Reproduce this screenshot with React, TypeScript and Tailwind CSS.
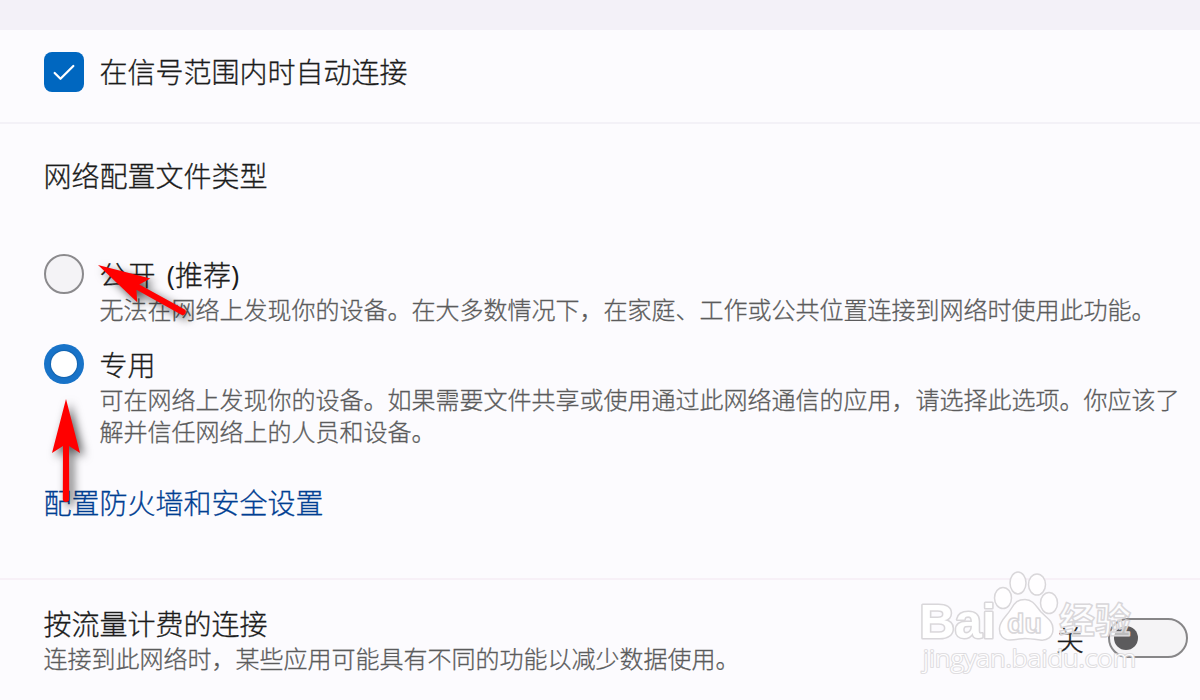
import { Check } from 'lucide-react';

function Radio({ checked }: { checked: boolean }) {
  return checked ? (
    <span className="flex h-10 w-10 shrink-0 items-center justify-center rounded-full bg-[#1873c8]">
      <span className="h-[26px] w-[26px] rounded-full bg-white shadow-[0_0_1px_1px_rgba(0,50,100,0.25)]" />
    </span>
  ) : (
    <span className="h-10 w-10 shrink-0 rounded-full border-2 border-[#8b8a8d] bg-[#f4f3f6]" />
  );
}

function Arrow() {
  return (
    <path
      d="M0 0 L14 54 L3 47 L3.2 100 Q3.2 103 0 103 Q-3.2 103 -3.2 100 L-3 47 L-14 54 Z"
      fill="#ff0000"
    />
  );
}

function Watermark() {
  return (
    <svg
      className="pointer-events-none absolute top-[570px] left-[915px] h-[110px] w-[230px]"
      viewBox="915 570 230 110"
    >
      <g fill="#ffffff" fillOpacity="0.8" stroke="#d9d7da" strokeWidth="1.5" strokeLinejoin="round">
        <ellipse cx="1003" cy="598" rx="8.5" ry="10.5" />
        <ellipse cx="1018" cy="583" rx="8" ry="11" />
        <ellipse cx="1037" cy="584.5" rx="8.5" ry="10.5" />
        <ellipse cx="1049" cy="603" rx="8.5" ry="10.5" />
        <path d="M1025 599.5 C1033 599.5 1036 606 1041 612 C1047 618 1053 621 1053 629 C1053 637 1047 641 1040 640 C1032 639 1028 638.5 1025 638.5 C1021 638.5 1018 639.5 1010 640 C1003 640 999 635 999.5 628 C1000 620 1007 616 1011 609 C1015 602 1018 599.5 1025 599.5 Z" />
        <text
          x="919.5"
          y="638"
          fontFamily='"Liberation Sans", sans-serif'
          fontWeight="700"
          fontSize="49"
          textLength="76"
          lengthAdjust="spacingAndGlyphs"
          strokeWidth="3.2"
          style={{ paintOrder: 'stroke' }}
          fillOpacity="1"
        >
          Bai
        </text>
        <text
          x="1007"
          y="632.5"
          fontFamily='"Liberation Sans", sans-serif'
          fontWeight="700"
          fontSize="28"
          textLength="35"
          lengthAdjust="spacingAndGlyphs"
        >
          du
        </text>
        <text
          x="1059"
          y="634"
          fontFamily='"Noto Sans CJK SC", sans-serif'
          fontWeight="700"
          fontSize="36"
          fillOpacity="0.6"
        >
          经验
        </text>
        <text
          x="923"
          y="666.5"
          fontFamily='"Open Sans", sans-serif'
          fontSize="24"
          textLength="213"
          lengthAdjust="spacingAndGlyphs"
          strokeWidth="2.2"
          strokeOpacity="0.8"
          fillOpacity="1"
          style={{ paintOrder: 'stroke' }}
        >
          jingyan.baidu.com
        </text>
      </g>
    </svg>
  );
}

export default function App() {
  return (
    <div className="relative h-[700px] w-[1200px] overflow-hidden bg-[#fcfbfe] font-['Noto_Sans_CJK_SC',sans-serif] text-[28px] leading-[38px] font-light whitespace-nowrap text-[#1b1b1b] [-webkit-text-stroke:0.3px]">
      <div className="h-[30px] bg-[#f3f1f8]" />

      <label className="flex h-[94px] gap-[15.5px] border-b-2 border-[#f3f1f7] pt-[22px] pl-11">
        <span className="flex h-10 w-10 items-center justify-center rounded-lg bg-[#0067c0]">
          <Check className="mt-0.5 h-7 w-7 text-white" strokeWidth={1.9} />
        </span>
        <span>在信号范围内时自动连接</span>
      </label>

      <section className="h-[456px] border-b-2 border-[#f7f0f7] pt-8 pl-[43.5px]">
        <h2>网络配置文件类型</h2>

        <div className="mt-[60px] ml-[0.5px] flex gap-[15.5px]">
          <Radio checked={false} />
          <div className="pt-px">
            <div>
              公开
              <span className="ml-1 font-['Open_Sans',sans-serif] font-normal [-webkit-text-stroke:0]">
                {' ('}
              </span>
              推荐
              <span className="font-['Open_Sans',sans-serif] font-normal [-webkit-text-stroke:0]">
                )
              </span>
            </div>
            <p className="-mt-px text-2xl leading-8 text-[#5b5b5c]">
              无法在网络上发现你的设备。在大多数情况下，在家庭、工作或公共位置连接到网络时使用此功能。
            </p>
          </div>
        </div>

        <div className="mt-[19px] ml-[0.5px] flex gap-[15.5px]">
          <Radio checked />
          <div className="pt-px">
            <div>专用</div>
            <p className="text-2xl leading-8 text-[#5b5b5c]">
              可在网络上发现你的设备。如果需要文件共享或使用通过此网络通信的应用，请选择此选项。你应该了
              <br />
              解并信任网络上的人员和设备。
            </p>
          </div>
        </div>

        <a className="mt-9 block text-[#003e92]">配置防火墙和安全设置</a>
      </section>

      <section className="flex justify-between pt-6 pr-3 pl-[43.5px]">
        <div>
          <h2>按流量计费的连接</h2>
          <p className="text-2xl leading-8 text-[#5b5b5c]">
            连接到此网络时，某些应用可能具有不同的功能以减少数据使用。
          </p>
        </div>
        <div className="flex gap-6 pt-3.5">
          <span className="pt-0.5">关</span>
          <span className="flex h-10 w-20 items-center rounded-full border-2 border-[#878688] bg-[#f5f4f6] pl-1">
            <span className="h-6 w-6 rounded-full bg-[#5c5b5d]" />
          </span>
        </div>
      </section>

      <Watermark />

      <svg
        className="pointer-events-none absolute inset-0 drop-shadow-[4px_4px_5px_rgba(0,0,0,0.65)]"
        width="1200"
        height="700"
      >
        <g transform="translate(98 265) rotate(-61) scale(0.97)">
          <Arrow />
        </g>
        <g transform="translate(66 399)">
          <Arrow />
        </g>
      </svg>
    </div>
  );
}
